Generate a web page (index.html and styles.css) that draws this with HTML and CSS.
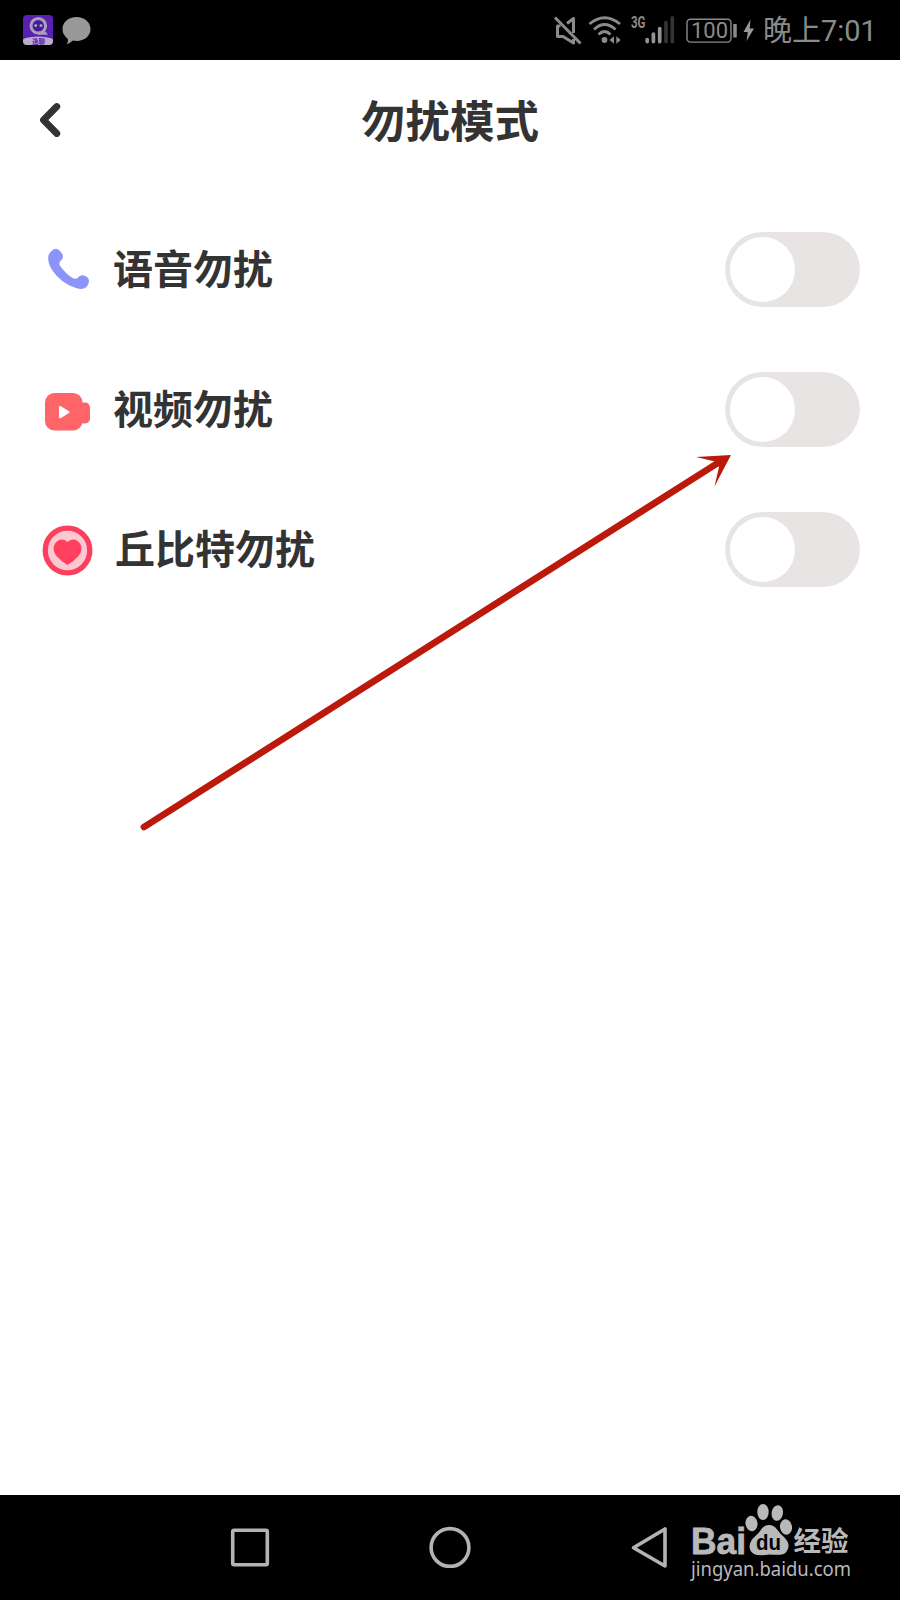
FILE: index.html
```
<!DOCTYPE html>
<html lang="zh-CN">
<head>
<meta charset="utf-8">
<title>勿扰模式</title>
<link rel="stylesheet" href="styles.css">
</head>
<body>
<div class="phone">
  <header class="status">
    <div class="notices">
      <svg width="30" height="30" viewBox="0 0 30 30">
        <defs><clipPath id="tile"><rect width="30" height="30" rx="4"/></clipPath></defs>
        <g clip-path="url(#tile)">
          <rect width="30" height="30" fill="#5a20b0"/>
          <ellipse cx="15" cy="27" rx="17" ry="5.5" fill="#b8b0c8"/>
          <circle cx="15.3" cy="10.8" r="7.3" fill="#451c96" stroke="#aaa0bb" stroke-width="3"/>
          <path d="M16 16.5h6.500l2.500 3.300H15z" fill="#aaa0bb"/>
          <circle cx="12.700" cy="10.500" r="1.500" fill="#aaa0bb"/>
          <circle cx="18" cy="10.500" r="1.500" fill="#aaa0bb"/>
        </g>
        <text class="tile-text" x="9" y="29" textLength="13">逸聊</text>
      </svg>
      <svg width="29" height="28" viewBox="0 0 29 28">
        <path d="M14.500 0C22.500 0 28.500 5 28.500 12S22.500 24 14.500 24q-2 0-3.500-.4Q8 26.500 4.500 27.200q2-2.200 1.300-5.500Q.5 18 .5 12C.5 5 6.500 0 14.500 0z" fill="#999"/>
      </svg>
    </div>
    <div class="system">
      <svg width="30" height="30" viewBox="0 0 30 30" fill="none" stroke="#8b8b8b" stroke-width="3">
        <path d="M7.500 11H4.500v10.500h5.500l10.500 6.500v-4M14 8.500L20.500 3.500v14.500" stroke-linejoin="round"/>
        <path d="M2 2.500L27.500 28.500" stroke-width="3"/>
      </svg>
      <svg class="wifi" width="34" height="30" viewBox="0 0 34 30" fill="none" stroke="#8b8b8b" stroke-width="2.800">
        <path d="M1.500 9Q16.500-3.500 32 9M6 14.500Q16.500 4.500 27.500 14.500M10.500 19.500Q16.500 13.500 22.500 19.500"/>
        <circle cx="16.500" cy="25" r="2.900" fill="#8b8b8b" stroke="none"/>
        <path d="M21.500 25l4.500-3.800v7.600zM32.800 25l-4.500-3.800v7.600z" fill="#8b8b8b" stroke="none"/>
      </svg>
      <svg class="signal" width="45" height="30" viewBox="0 0 45 30">
        <text class="network" x="1" y="13" textLength="14.500" lengthAdjust="spacingAndGlyphs">3G</text>
        <g stroke="#949494" stroke-width="3.700" stroke-linecap="round">
          <path d="M17.200 24.600v2M23.400 19v7.600M29.700 13.500v13.100"/>
          <path d="M36 7.700v18.900M42.300 2.800v23.800" stroke="#343434"/>
        </g>
      </svg>
      <svg class="battery" width="70" height="30" viewBox="0 0 70 30">
        <rect x="1" y="4.300" width="44" height="22.800" rx="3.500" fill="none" stroke="#8b8b8b" stroke-width="1.400"/>
        <path d="M49 9v13.500" stroke="#8b8b8b" stroke-width="3.500"/>
        <text class="charge" x="5" y="23.200" textLength="37" lengthAdjust="spacingAndGlyphs">100</text>
        <path d="M64.500 4.500L57.500 17h4.300L60.500 26 68 13.500h-4.300z" fill="#999"/>
      </svg>
      <span class="clock">晚上7:01</span>
    </div>
  </header>
  <main class="page">
    <div class="title-bar">
      <svg class="back" width="22" height="38" viewBox="0 0 22 38">
        <path d="M17.800 4.500L4.500 18 17.800 31.500" fill="none" stroke="#333" stroke-width="6.800" stroke-linecap="round" stroke-linejoin="round"/>
      </svg>
      <h1 class="title">勿扰模式</h1>
    </div>
    <section class="row">
      <svg class="icon" width="52" height="52" viewBox="0 0 52 52">
        <path d="M8 8.500Q13 2 18 7Q22.500 11.500 20 15.500Q15.500 18.500 18.500 22.500Q24 30 30 33.500Q34.500 36.500 37 32.500Q42 29.500 46 34Q48.500 38 44.500 43Q40 46.500 32.500 43.500Q18.500 38.500 10 26Q3.500 14.500 8 8.500z" fill="#8b94f9"/>
      </svg>
      <span class="label">语音勿扰</span>
      <span class="toggle"><i class="knob"></i></span>
    </section>
    <section class="row">
      <svg class="icon" width="52" height="52" viewBox="0 0 52 52">
        <rect x="3" y="9" width="37.500" height="37.500" rx="9.500" fill="#fd6568"/>
        <rect x="36" y="18.500" width="12" height="21" rx="5" fill="#fd6568"/>
        <path d="M18 22.800v10.500l8.500-5.200z" fill="#fff" stroke="#fff" stroke-width="2" stroke-linejoin="round"/>
      </svg>
      <span class="label">视频勿扰</span>
      <span class="toggle"><i class="knob"></i></span>
    </section>
    <section class="row">
      <svg class="icon" width="52" height="52" viewBox="0 0 52 52">
        <circle cx="25.500" cy="26.500" r="22.300" fill="#ffc7d1" stroke="#fb405f" stroke-width="5.300"/>
        <path d="M25.500 41Q20 38 14.500 32Q9.500 25.500 13 19.500Q18.500 12.500 25.500 18Q32.500 12.500 38 19.500Q41.500 25.500 36.500 32Q31 38 25.500 41z" fill="#ff405f"/>
      </svg>
      <span class="label label-cupid">丘比特勿扰</span>
      <span class="toggle"><i class="knob"></i></span>
    </section>
  </main>
  <footer class="nav">
    <svg class="nav-icon" width="42" height="42" viewBox="0 0 42 42"><rect x="3.700" y="4.200" width="34.600" height="34.600" rx="1.500"/></svg>
    <svg class="nav-icon" width="42" height="42" viewBox="0 0 42 42"><circle cx="21" cy="21.500" r="18.900"/></svg>
    <svg class="nav-icon" width="42" height="42" viewBox="0 0 42 42"><path d="M4.500 21.700L36 3V40z"/></svg>
    <svg class="logo" width="170" height="90" viewBox="0 0 170 90">
      <text class="brand" x="1" y="54" textLength="55" lengthAdjust="spacingAndGlyphs">Bai</text>
      <g fill="#b9b9b9">
        <ellipse cx="61.500" cy="23.500" rx="6" ry="7.800" transform="rotate(-8 61.500 23.500)"/>
        <ellipse cx="73" cy="12" rx="5.700" ry="8"/>
        <ellipse cx="87.300" cy="13" rx="5.700" ry="7.800" transform="rotate(10 87.300 13)"/>
        <ellipse cx="96" cy="27" rx="6" ry="7.800" transform="rotate(-8 96 27)"/>
        <path d="M79 25Q84 25 87.500 30Q90 33.500 94 37Q99 42 98.500 47Q97 54.500 90 54.800Q84 55 79 54.500Q73 55.500 67 55Q60 53.500 59.500 47Q59.500 41 65 36.500Q69 33 71.500 29Q74.500 25 79 25z"/>
      </g>
      <text class="paw-text" x="66" y="50" textLength="25" lengthAdjust="spacingAndGlyphs">du</text>
      <text class="brand-cn" x="103.500" y="51" textLength="55">经验</text>
      <text class="site" x="1" y="75.500" textLength="160" lengthAdjust="spacingAndGlyphs">jingyan.baidu.com</text>
    </svg>
  </footer>
  <svg class="pointer" width="900" height="1600" viewBox="0 0 900 1600">
    <path d="M144 827L717 463.500" stroke="#bb190b" stroke-width="6.800" stroke-linecap="round"/>
    <path d="M731 455L696 457L715 461.500L719 467L714.500 486.500z" fill="#bb190b"/>
  </svg>
</div>
</body>
</html>
```
FILE: styles.css
```
* { box-sizing: border-box; }
body { margin: 0; background: #fff; font-family: Roboto, "Noto Sans CJK SC", sans-serif; }
svg { display: block; flex: none; }
.phone { position: relative; display: flex; flex-direction: column; width: 900px; height: 1600px; overflow: hidden; }
.status { display: flex; justify-content: space-between; height: 60px; padding: 0 22px 0 23px; background: #000; }
.notices { display: flex; gap: 9px; padding-top: 15px; }
.notices svg + svg { margin-top: 2px; }
.tile-text { font: bold 6.5px "Noto Sans CJK SC", sans-serif; fill: #5a20b0; }
.system { display: flex; align-items: flex-start; padding-top: 15px; color: #8b8b8b; }
.wifi { margin-left: 5px; }
.signal { margin-left: 8px; }
.battery { margin-left: 11px; }
.network { font: bold 16px Roboto, sans-serif; fill: #8b8b8b; }
.charge { font: 22.5px Roboto, sans-serif; fill: #8b8b8b; }
.clock { width: 115px; margin-left: 7px; font: 29px/32px Roboto, "Noto Sans CJK SC", sans-serif; white-space: nowrap; }
.page { flex: 1; background: #fff; color: #333; }
.title-bar { display: grid; grid-template-columns: 62px 1fr 62px; align-items: center; height: 140px; padding-bottom: 19px; }
.back { margin-left: 39px; }
.title { margin: 0; padding-bottom: 4px; text-align: center; font: bold 44.5px/60px "Noto Sans CJK SC", sans-serif; }
.row { display: flex; align-items: center; height: 140px; padding: 0 40px 1px 42px; }
.label { flex: 1; margin-left: 19px; padding-bottom: 5px; font: bold 40px/56px "Noto Sans CJK SC", sans-serif; }
.label-cupid { margin-left: 21px; }
.toggle { width: 135px; height: 75px; padding: 5px; border-radius: 38px; background: #e9e4e4; }
.knob { display: block; width: 65px; height: 65px; border-radius: 50%; background: #fff; }
.nav { display: flex; height: 105px; padding: 5px 0 0 229px; background: #000; }
.nav-icon { margin: 26px 158px 0 0; fill: none; stroke: #b3b3b3; stroke-width: 3.6; stroke-linejoin: round; }
.nav-icon:nth-child(3) { margin-right: 19px; }
.logo { fill: #b9b9b9; }
.brand { font: bold 36px "Liberation Sans", sans-serif; stroke: #b9b9b9; stroke-width: 0.8; }
.brand-cn { font: bold 27.5px "Noto Sans CJK SC", sans-serif; }
.paw-text { font: bold 22px "Liberation Sans", sans-serif; fill: #000; }
.site { font: 20px "Noto Sans", sans-serif; }
.pointer { position: absolute; left: 0; top: 0; fill: none; pointer-events: none; }
```
